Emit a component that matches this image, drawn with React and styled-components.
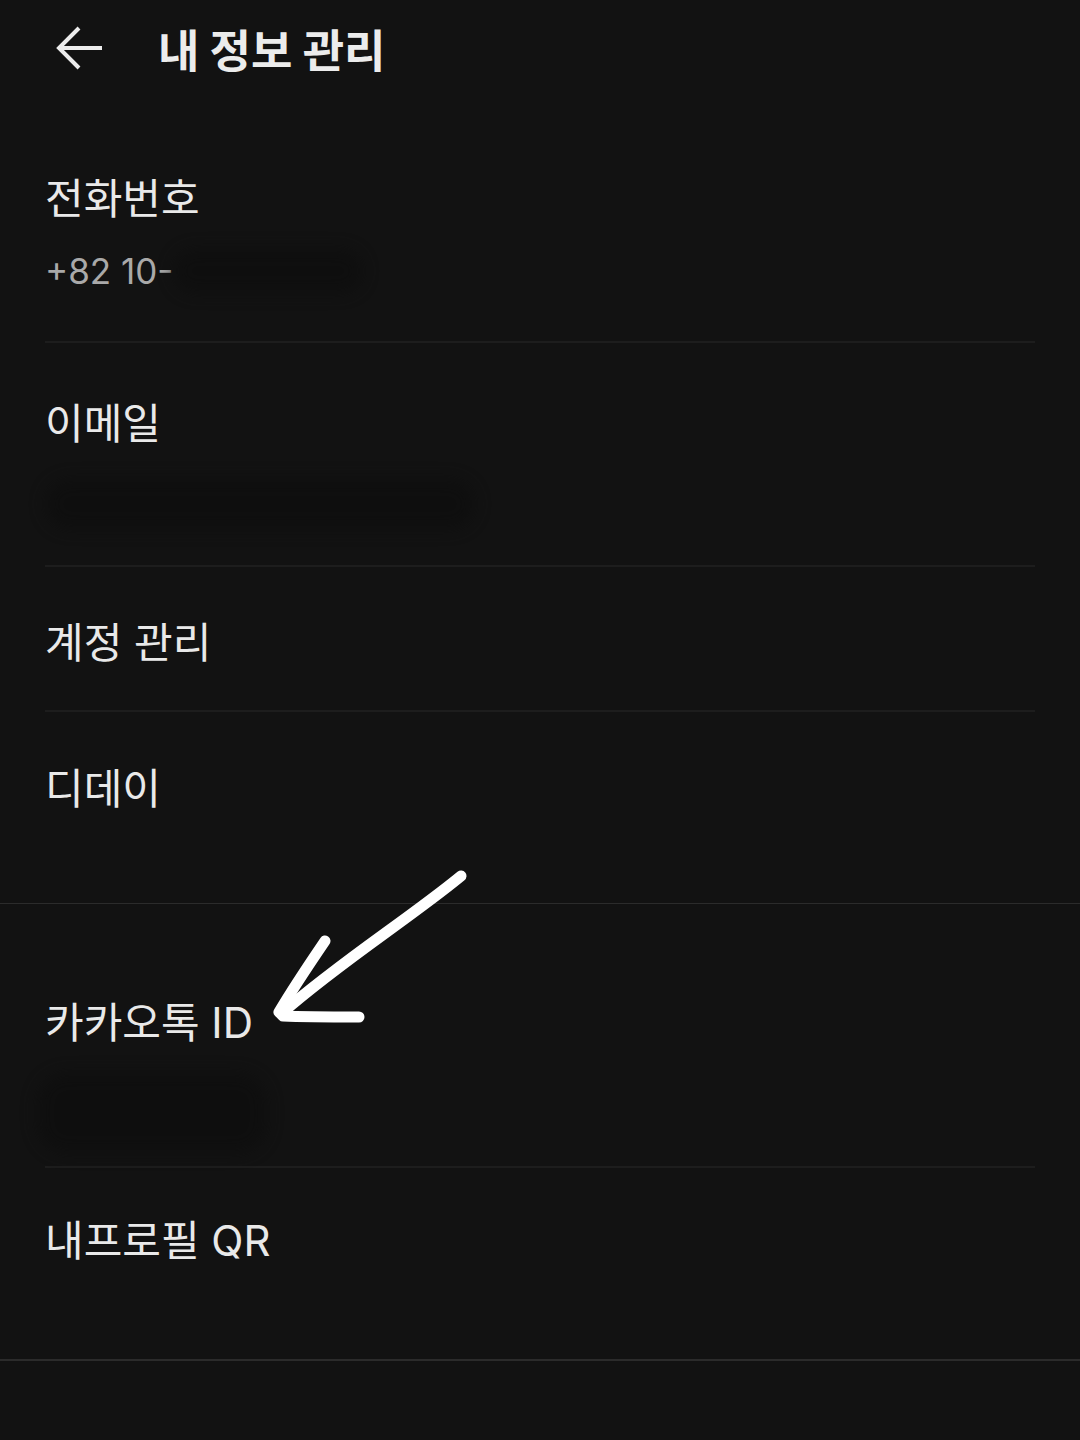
import React from 'react';
import styled, { createGlobalStyle } from 'styled-components';

const GlobalStyle = createGlobalStyle`
  html, body {
    margin: 0;
    padding: 0;
    background: #121212;
  }
  body {
    font-family: Inter, "Noto Sans CJK KR", sans-serif;
    color: #e9e9e9;
  }
`;

const Page = styled.div`
  position: relative;
  width: 1080px;
  min-height: 1440px;
  background: #121212;
  overflow: hidden;
`;

const Header = styled.header`
  display: flex;
  align-items: center;
  height: 96px;
  padding-left: 54px;
  gap: 54px;
`;

const BackButton = styled.button`
  display: flex;
  align-items: center;
  justify-content: center;
  width: 50px;
  height: 50px;
  padding: 0;
  border: none;
  background: none;
  cursor: pointer;
`;

const Title = styled.h1`
  margin: 0;
  font-family: "Noto Sans CJK KR", sans-serif;
  font-size: 45px;
  font-weight: 700;
  color: #ececec;
`;

const Section = styled.section`
  border-bottom: ${({ $last }) => ($last ? '2px solid #2b2b2b' : '1px solid #2b2b2b')};
`;

const Item = styled.div`
  margin: 0 45px;
  padding-top: ${({ $top }) => $top}px;
  padding-bottom: ${({ $bottom }) => $bottom}px;
  border-bottom: ${({ $divider }) => ($divider ? '2px solid #1d1d1d' : 'none')};
`;

const Label = styled.div`
  font-size: 42px;
  line-height: 50px;
  color: #e9e9e9;
`;

const Value = styled.div`
  display: flex;
  align-items: center;
  margin-top: ${({ $gap }) => $gap}px;
  height: ${({ $h }) => $h}px;
  font-size: 35px;
  color: #a9a9a9;
`;

const Smudge = styled.span`
  display: inline-block;
  width: ${({ $w }) => $w}px;
  height: ${({ $h }) => $h}px;
  margin-left: ${({ $ml }) => $ml || 0}px;
  border-radius: 30px;
  background: #0e0e0e;
  opacity: 0.8;
  filter: blur(8px);
`;

const Annotation = styled.svg`
  position: absolute;
  left: 0;
  top: 0;
  pointer-events: none;
`;

const BackIcon = () => (
  <svg width="50" height="50" viewBox="0 0 50 50" fill="none" stroke="#ececec" strokeWidth="4" strokeLinecap="square">
    <path d="M46 25 H6" />
    <path d="M25 5 L5 25 L25 45" strokeLinecap="butt" />
  </svg>
);

export default function App() {
  return (
    <Page>
      <GlobalStyle />
      <Header>
        <BackButton aria-label="뒤로">
          <BackIcon />
        </BackButton>
        <Title>내 정보 관리</Title>
      </Header>

      <Section>
        <Item $top={78} $bottom={45} $divider>
          <Label>전화번호</Label>
          <Value $gap={22} $h={50}>
            +82 10-
            <Smudge $w={190} $h={44} />
          </Value>
        </Item>
        <Item $top={56} $bottom={26} $divider>
          <Label>이메일</Label>
          <Value $gap={20} $h={70}>
            <Smudge $w={430} $h={50} />
          </Value>
        </Item>
        <Item $top={51} $bottom={42} $divider>
          <Label>계정 관리</Label>
        </Item>
        <Item $top={52} $bottom={89}>
          <Label>디데이</Label>
        </Item>
      </Section>

      <Section $last>
        <Item $top={94} $bottom={8} $divider>
          <Label>카카오톡 ID</Label>
          <Value $gap={20} $h={90}>
            <Smudge $w={230} $h={80} $ml={-8} />
          </Value>
        </Item>
        <Item $top={48} $bottom={93}>
          <Label>내프로필 QR</Label>
        </Item>
      </Section>

      <Annotation width="1080" height="1440" viewBox="0 0 1080 1440" fill="none">
        <g stroke="#ffffff" strokeWidth="11" strokeLinecap="round" strokeLinejoin="round">
          <path d="M461 876 C 410 918, 340 962, 282 1013" />
          <path d="M325 941 C 308 966, 292 990, 279 1012 L 283 1016 C 305 1017, 330 1017, 359 1017" />
        </g>
      </Annotation>
    </Page>
  );
}
